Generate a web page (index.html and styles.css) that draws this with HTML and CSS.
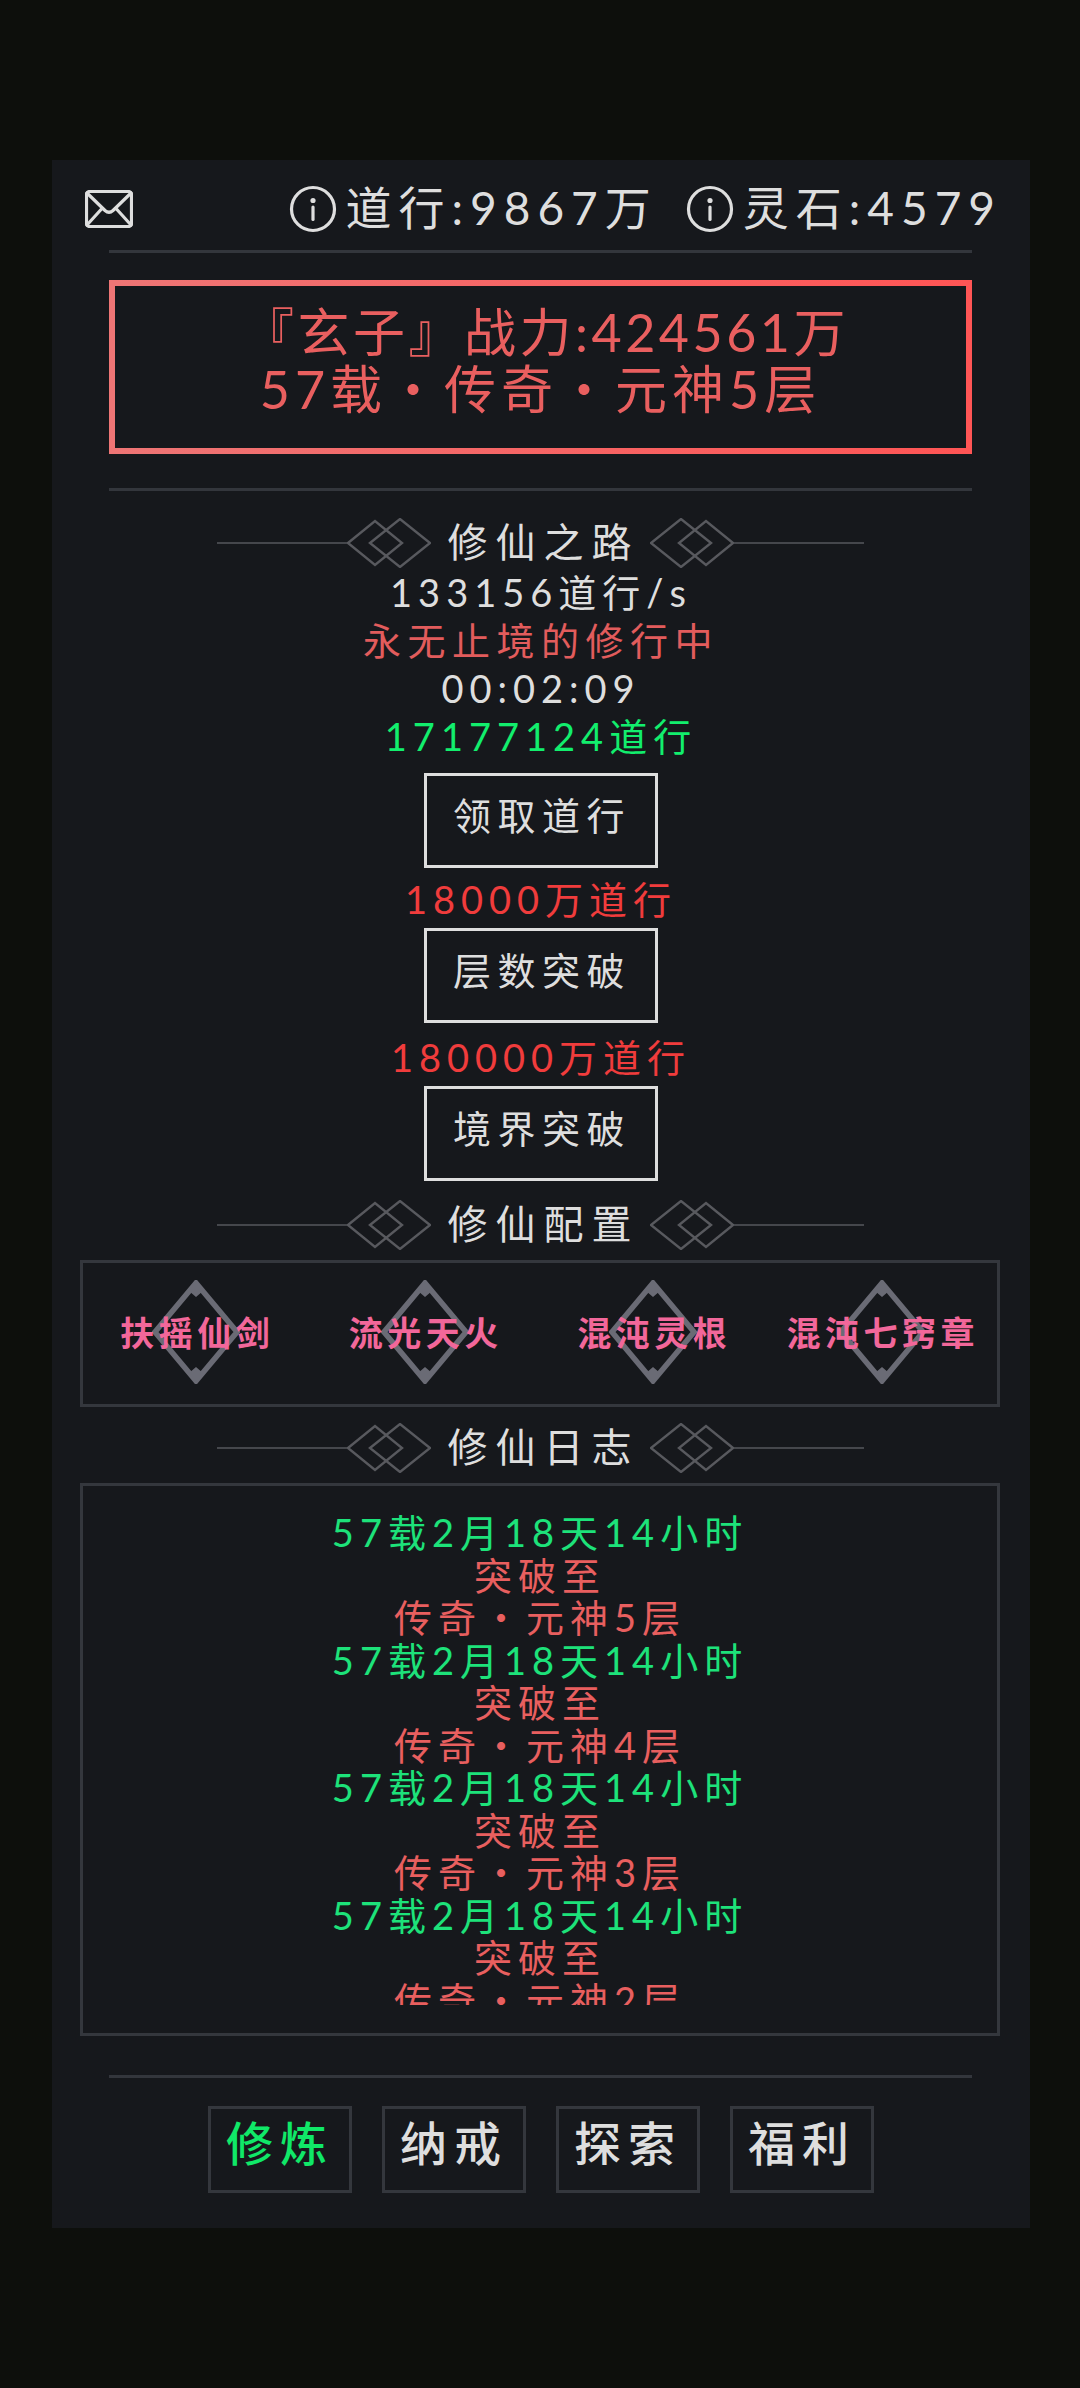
FILE: index.html
```html
<!DOCTYPE html>
<html lang="zh-CN">

<head>
    <meta charset="UTF-8">
    <meta name="viewport" content="width=device-width, initial-scale=1.0">
    <title>修仙之路</title>
    <link rel="stylesheet" href="styles.css">
</head>

<body>
    <div class="panel">

        <div class="topbar">
            <svg class="mail" viewBox="0 0 48 38" width="48" height="38">
                <rect x="1.5" y="1.5" width="45" height="35" rx="3" />
                <path d="M2 3 L20 20.5 Q24 24 28 20.5 L46 3 M2 35 L16.5 19 M46 35 L31.5 19" />
            </svg>
            <div class="res">
                <svg class="info" viewBox="0 0 48 48" width="48" height="48">
                    <circle cx="24" cy="24" r="21.5" />
                    <path d="M24 22 V34.5" />
                    <circle class="dot" cx="24" cy="15.5" r="2.6" />
                </svg>
                <span>道行:9867万</span>
                <svg class="info info-two" viewBox="0 0 48 48" width="48" height="48">
                    <circle cx="24" cy="24" r="21.5" />
                    <path d="M24 22 V34.5" />
                    <circle class="dot" cx="24" cy="15.5" r="2.6" />
                </svg>
                <span>灵石:4579</span>
            </div>
        </div>

        <div class="divider first"></div>

        <div class="hero">
            <div class="hero-name">『玄子』战力:424561万</div>
            <div class="hero-rank">57载・传奇・元神5层</div>
        </div>

        <div class="divider second"></div>

        <div class="title">
            <i class="line"></i>
            <svg class="orn" viewBox="0 0 84 50" width="84" height="50">
                <path d="M1 25 L28 3 L55 25 L28 47 Z M23 25 L53 1 L83 25 L53 49 Z" />
            </svg>
            <span>修仙之路</span>
            <svg class="orn flip" viewBox="0 0 84 50" width="84" height="50">
                <path d="M1 25 L28 3 L55 25 L28 47 Z M23 25 L53 1 L83 25 L53 49 Z" />
            </svg>
            <i class="line"></i>
        </div>

        <div class="main">
            <div class="row">133156道行/s</div>
            <div class="row red">永无止境的修行中</div>
            <div class="row">00:02:09</div>
            <div class="row green">17177124道行</div>
            <button class="btn">领取道行</button>
            <div class="row cost">18000万道行</div>
            <button class="btn">层数突破</button>
            <div class="row cost next">180000万道行</div>
            <button class="btn">境界突破</button>
        </div>

        <div class="title config-title">
            <i class="line"></i>
            <svg class="orn" viewBox="0 0 84 50" width="84" height="50">
                <path d="M1 25 L28 3 L55 25 L28 47 Z M23 25 L53 1 L83 25 L53 49 Z" />
            </svg>
            <span>修仙配置</span>
            <svg class="orn flip" viewBox="0 0 84 50" width="84" height="50">
                <path d="M1 25 L28 3 L55 25 L28 47 Z M23 25 L53 1 L83 25 L53 49 Z" />
            </svg>
            <i class="line"></i>
        </div>

        <div class="config">
            <div class="slot">
                <svg class="gem" viewBox="0 0 88 104" width="88" height="104">
                    <path class="gem-edge" d="M44 3 L85 52 L44 101 L3 52 Z" />
                    <path class="gem-tip" d="M44 3 L51 11 L44 17 L37 11 Z M44 101 L51 93 L44 87 L37 93 Z" />
                </svg>
                <span>扶摇仙剑</span>
            </div>
            <div class="slot">
                <svg class="gem" viewBox="0 0 88 104" width="88" height="104">
                    <path class="gem-edge" d="M44 3 L85 52 L44 101 L3 52 Z" />
                    <path class="gem-tip" d="M44 3 L51 11 L44 17 L37 11 Z M44 101 L51 93 L44 87 L37 93 Z" />
                </svg>
                <span>流光天火</span>
            </div>
            <div class="slot">
                <svg class="gem" viewBox="0 0 88 104" width="88" height="104">
                    <path class="gem-edge" d="M44 3 L85 52 L44 101 L3 52 Z" />
                    <path class="gem-tip" d="M44 3 L51 11 L44 17 L37 11 Z M44 101 L51 93 L44 87 L37 93 Z" />
                </svg>
                <span>混沌灵根</span>
            </div>
            <div class="slot">
                <svg class="gem" viewBox="0 0 88 104" width="88" height="104">
                    <path class="gem-edge" d="M44 3 L85 52 L44 101 L3 52 Z" />
                    <path class="gem-tip" d="M44 3 L51 11 L44 17 L37 11 Z M44 101 L51 93 L44 87 L37 93 Z" />
                </svg>
                <span>混沌七窍章</span>
            </div>
        </div>

        <div class="title log-title">
            <i class="line"></i>
            <svg class="orn" viewBox="0 0 84 50" width="84" height="50">
                <path d="M1 25 L28 3 L55 25 L28 47 Z M23 25 L53 1 L83 25 L53 49 Z" />
            </svg>
            <span>修仙日志</span>
            <svg class="orn flip" viewBox="0 0 84 50" width="84" height="50">
                <path d="M1 25 L28 3 L55 25 L28 47 Z M23 25 L53 1 L83 25 L53 49 Z" />
            </svg>
            <i class="line"></i>
        </div>

        <div class="log">
            <div class="log-inner">
                <div class="when">57载2月18天14小时</div>
                <div>突破至</div>
                <div>传奇・元神5层</div>
                <div class="when">57载2月18天14小时</div>
                <div>突破至</div>
                <div>传奇・元神4层</div>
                <div class="when">57载2月18天14小时</div>
                <div>突破至</div>
                <div>传奇・元神3层</div>
                <div class="when">57载2月18天14小时</div>
                <div>突破至</div>
                <div>传奇・元神2层</div>
            </div>
        </div>

        <div class="divider third"></div>

        <div class="nav">
            <div class="tab active">修炼</div>
            <div class="tab">纳戒</div>
            <div class="tab">探索</div>
            <div class="tab">福利</div>
        </div>

    </div>
</body>

</html>
```

FILE: styles.css
```css
* {
    box-sizing: border-box;
}

body {
    margin: 0;
    height: 2388px;
    background-color: #0d0f0c;
    font-family: Lato, "Noto Sans CJK SC", sans-serif;
    color: #dedede;
    overflow: hidden;
}

.panel {
    width: 978px;
    height: 2068px;
    margin: 160px 0 0 52px;
    padding-top: 26px;
    background-color: #16181c;
}

.topbar {
    display: flex;
    justify-content: space-between;
    align-items: center;
    height: 46px;
    padding: 0 28px 0 33px;
}

.mail rect,
.mail path,
.info circle,
.info path {
    fill: none;
    stroke: #dedede;
    stroke-width: 3.2;
    stroke-linecap: round;
}

.info .dot {
    fill: #dedede;
    stroke: none;
}

.res {
    display: flex;
    align-items: center;
    font-size: 46px;
    letter-spacing: 7px;
}

.res span {
    margin-left: 9px;
    padding-bottom: 8px;
}

.info-two {
    margin-left: 28px;
}

.divider {
    height: 3px;
    margin: 0 58px 0 57px;
    background-color: #33363c;
}

.divider.first {
    margin-top: 18px;
}

.divider.second {
    margin-top: 34px;
}

.divider.third {
    margin-top: 39px;
}

.hero {
    height: 174px;
    margin: 27px 58px 0 57px;
    padding-top: 18px;
    border: 6px solid;
    border-image: linear-gradient(90deg, #ee7575, #ff5555) 1;
    text-align: center;
    font-size: 52px;
    line-height: 57px;
    letter-spacing: 3.5px;
    color: #e95f5f;
}

.hero-name {
    padding-left: 10px;
}

.hero-rank {
    letter-spacing: 5px;
}

.title {
    display: flex;
    align-items: center;
    justify-content: center;
    height: 50px;
    margin-top: 27px;
    padding-right: 2px;
    font-size: 40px;
    letter-spacing: 8px;
}

.title span {
    margin: 0 10px 0 17px;
    padding-bottom: 7px;
}

.title .line {
    width: 130px;
    height: 2px;
    background-color: #45474c;
}

.orn {
    flex: none;
}

.orn path {
    fill: none;
    stroke: #58595e;
    stroke-width: 2.4;
}

.flip {
    transform: scaleX(-1);
}

.main {
    display: flex;
    flex-direction: column;
    align-items: center;
    margin-top: 3px;
}

.row {
    height: 48px;
    line-height: 42px;
    font-size: 38px;
    letter-spacing: 6px;
}

.red {
    color: #e25c5c;
    letter-spacing: 6.5px;
}

.green {
    color: #12ee6d;
}

.cost {
    margin-top: 10px;
    color: #f03c3c;
}

.cost.next {
    margin-top: 13px;
}

.btn {
    width: 234px;
    height: 95px;
    margin-top: 10px;
    background: none;
    border: 3px solid #dedede;
    color: #dedede;
    font: inherit;
    font-size: 38px;
    letter-spacing: 6.5px;
    padding: 0 0 14px 2px;
}

.cost + .btn {
    margin-top: 2px;
}

.config-title {
    margin-top: 19px;
}

.config {
    display: flex;
    height: 147px;
    margin: 10px 30px 0 28px;
    border: 3px solid #34373d;
}

.slot {
    position: relative;
    flex: 1;
    display: flex;
    align-items: center;
    justify-content: center;
    font-size: 34px;
    letter-spacing: 4.5px;
    font-weight: 700;
    color: #f2679a;
    white-space: nowrap;
}

.slot span {
    position: relative;
    padding-bottom: 5px;
}

.gem {
    position: absolute;
    left: 50%;
    top: 17px;
    margin-left: -45px;
    filter: blur(0.7px);
}

.gem-edge {
    fill: none;
    stroke: #6a6b75;
    stroke-width: 5.5;
}

.gem-tip {
    fill: #6a6b75;
}

.log-title {
    margin-top: 16px;
}

.log {
    height: 553px;
    margin: 10px 30px 0 28px;
    padding: 20px 0 28px;
    border: 3px solid #34373d;
}

.log-inner {
    height: 499px;
    padding-top: 5px;
    overflow: hidden;
    text-align: center;
    font-size: 38px;
    line-height: 42.5px;
    letter-spacing: 6px;
    color: #e85f5f;
}

.log-inner .when {
    color: #1de27a;
}

.nav {
    display: flex;
    justify-content: center;
    gap: 30px;
    margin-top: 28px;
}

.tab {
    width: 144px;
    height: 87px;
    border: 3px solid #34373d;
    text-align: center;
    line-height: 68px;
    font-size: 47px;
    letter-spacing: 7px;
    font-weight: 500;
}

.tab.active {
    color: #10e868;
}
```
